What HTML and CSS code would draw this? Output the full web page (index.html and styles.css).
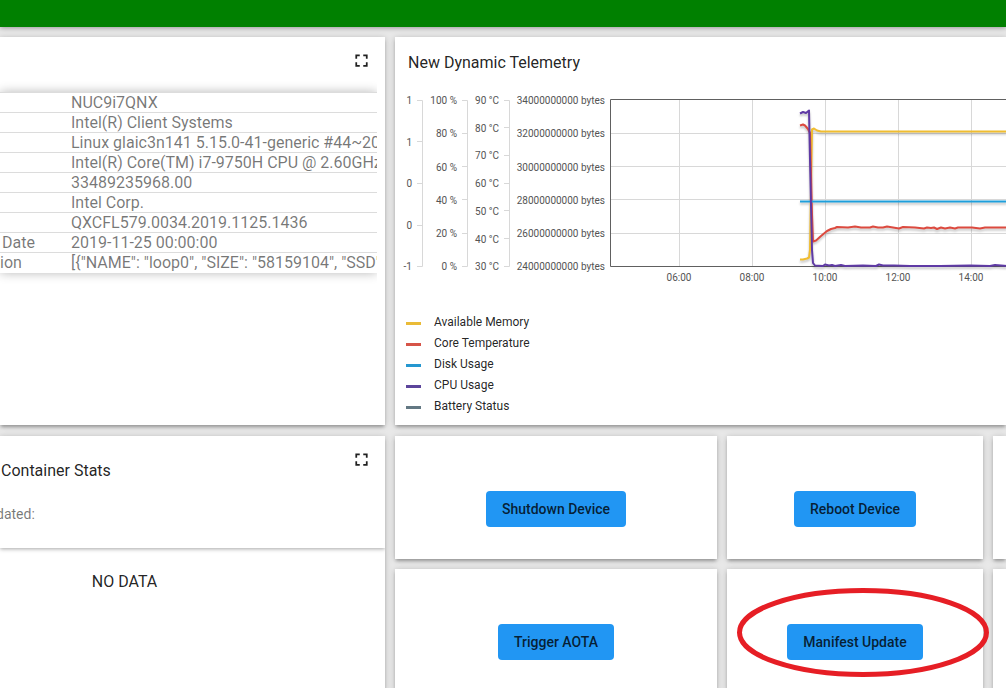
FILE: index.html
```html
<!DOCTYPE html>
<html lang="en">
<head>
<meta charset="utf-8">
<title>Device Dashboard</title>
<link rel="stylesheet" href="styles.css">
</head>
<body>
<header class="toolbar"></header>
<main class="dashboard">
  <section class="card info">
    <div class="card-tools">
      <button class="icon-button" type="button" aria-label="Fullscreen">
        <svg class="icon" viewBox="0 0 24 24"><path d="M7 14H5v5h5v-2H7v-3zm-2-4h2V7h3V5H5v5zm12 7h-3v2h5v-5h-2v3zM14 5v2h3v3h2V5h-5z"/></svg>
      </button>
    </div>
    <div class="table-clip">
      <table class="attributes">
        <tr><td class="key"></td><td>NUC9i7QNX</td></tr>
        <tr><td class="key"></td><td>Intel(R) Client Systems</td></tr>
        <tr><td class="key"></td><td>Linux glaic3n141 5.15.0-41-generic #44~20</td></tr>
        <tr><td class="key"></td><td>Intel(R) Core(TM) i7-9750H CPU @ 2.60GHz</td></tr>
        <tr><td class="key"></td><td>33489235968.00</td></tr>
        <tr><td class="key"></td><td>Intel Corp.</td></tr>
        <tr><td class="key"></td><td>QXCFL579.0034.2019.1125.1436</td></tr>
        <tr><td class="key indent">Date</td><td>2019-11-25 00:00:00</td></tr>
        <tr><td class="key">ion</td><td>[{"NAME": "loop0", "SIZE": "58159104", "SSD"</td></tr>
      </table>
    </div>
  </section>

  <section class="card telemetry">
    <h2 class="title">New Dynamic Telemetry</h2>
    <svg class="chart" viewBox="395 92 611 195" role="img" aria-label="Telemetry over time">
      <path class="axis" d="M417 100.5h5.500v166h-5.500M417 141.500h5M417 183.500h5M417 225.500h5M462 100.500h5.500v166h-5.500M462 133.500h5M462 166.500h5M462 199.500h5M462 233.500h5M504 100.500h5.500v166h-5.500M504 127.500h5M504 155.500h5M504 183.500h5M504 210.500h5M504 238.500h5"/>
      <g class="tick end">
        <text x="412" y="104">1</text><text x="412" y="146">1</text><text x="412" y="187">0</text><text x="412" y="229">0</text><text x="412" y="270">-1</text>
        <text x="457" y="104">100 %</text><text x="457" y="137">80 %</text><text x="457" y="171">60 %</text><text x="457" y="204">40 %</text><text x="457" y="237">20 %</text><text x="457" y="270">0 %</text>
        <text x="499" y="104">90 °C</text><text x="499" y="132">80 °C</text><text x="499" y="159">70 °C</text><text x="499" y="187">60 °C</text><text x="499" y="215">50 °C</text><text x="499" y="243">40 °C</text><text x="499" y="270">30 °C</text>
        <text x="605" y="104">34000000000 bytes</text><text x="605" y="137">32000000000 bytes</text><text x="605" y="171">30000000000 bytes</text><text x="605" y="204">28000000000 bytes</text><text x="605" y="237">26000000000 bytes</text><text x="605" y="270">24000000000 bytes</text>
      </g>
      <path class="axis" d="M611 133.500h395M611 166.500h395M611 199.500h395M611 233.500h395M679.500 100v166M752.500 100v166M825.500 100v166M898.500 100v166M971.500 100v166"/>
      <path class="frame" d="M1007 99.500H610.500V266.500H1007"/>
      <g class="tick middle">
        <text x="679" y="281">06:00</text><text x="752" y="281">08:00</text><text x="825" y="281">10:00</text><text x="898" y="281">12:00</text><text x="971" y="281">14:00</text>
      </g>
      <g class="series">
        <path class="memory" d="M800 259.500L803 259.500 807 258.500 809 257.500 810 249.500 812 129.500 814 128.500 817 130.500 821 131.500H1007"/>
        <path class="temperature" d="M800 125.500L803 124.500 805 125.500 808 129 810 133 812 214 813 241.500 816 240.500 821 236 827 231 831 229 835 228 837 227 848 227.500 855 226.500 861 227.500 870 227.500 873 226.500 878 227.500 883 227.500 887 226.500 893 227.500 899 228.500 903 227 915 227.500 924 228.500 927 227.500 931 228 934 227.500 937 229 941 227.500 945 228.500 950 227.500 955 228.500 958 227.500 972 227.500 980 228.500 985 227.500H1007"/>
        <path class="disk" d="M800 201.500H1007"/>
        <path class="cpu" d="M800 113.500L803 112 806 113 809 110.500 810 160 812 250 813 263 815 265.500 823 266 825 264.500 829 265.500 832 265 835 266 841 265 845 266 863 265.500 876 266 879 264.500 883 265.500 894 265.500 910 266 940 266 970 265.500 990 266 995 265 1007 266"/>
      </g>
    </svg>
    <ul class="legend">
      <li><span class="swatch yellow"></span>Available Memory</li>
      <li><span class="swatch red"></span>Core Temperature</li>
      <li><span class="swatch blue"></span>Disk Usage</li>
      <li><span class="swatch purple"></span>CPU Usage</li>
      <li><span class="swatch slate"></span>Battery Status</li>
    </ul>
  </section>

  <section class="card stats">
    <div class="stats-head">
      <div class="title-row">
        <h2 class="title">Container Stats</h2>
        <button class="icon-button" type="button" aria-label="Fullscreen">
          <svg class="icon" viewBox="0 0 24 24"><path d="M7 14H5v5h5v-2H7v-3zm-2-4h2V7h3V5H5v5zm12 7h-3v2h5v-5h-2v3zM14 5v2h3v3h2V5h-5z"/></svg>
        </button>
      </div>
      <p class="updated">dated:</p>
    </div>
    <p class="empty">NO DATA</p>
  </section>

  <section class="card action"><button class="button" type="button">Shutdown Device</button></section>
  <section class="card action"><button class="button" type="button">Reboot Device</button></section>
  <section class="card action"></section>
  <section class="card action"><button class="button" type="button">Trigger AOTA</button></section>
  <section class="card action marked">
    <button class="button" type="button">Manifest Update</button>
    <svg class="marker" viewBox="0 0 252 89"><ellipse cx="126" cy="44.500" rx="123.500" ry="42"/></svg>
  </section>
  <section class="card action"></section>
</main>
</body>
</html>
```
FILE: styles.css
```css
* { box-sizing: border-box; }
body {
  margin: 0;
  height: 100vh;
  overflow: hidden;
  background: #e8e8e8;
  color: rgba(0, 0, 0, 0.87);
  font-family: Roboto, sans-serif;
  font-size: 16px;
}
h2, p, ul { margin: 0; padding: 0; }
.toolbar {
  height: 27px;
  background: #008000;
  box-shadow: 0 1px 5px rgba(0, 0, 0, 0.35);
}
.dashboard {
  display: grid;
  grid-template-columns: minmax(0, 385fr) minmax(0, 322fr) minmax(0, 256fr) minmax(0, 13fr);
  grid-template-rows: 389px 123px 123px;
  gap: 10px;
  padding-top: 10px;
}
.card {
  min-width: 0;
  background: #fff;
  box-shadow: 0 1px 6px rgba(0, 0, 0, 0.22), 0 3px 3px -1px rgba(0, 0, 0, 0.24);
}
.info, .telemetry { margin-bottom: 1px; }
.telemetry { grid-column: 2 / -1; }
.stats { grid-row: 2 / 4; }
.title { font-size: 16px; line-height: 20px; font-weight: 400; }

.icon-button {
  display: flex;
  padding: 0;
  border: 0;
  background: none;
}
.icon { width: 21px; height: 21px; fill: #212121; }
.card-tools {
  display: flex;
  justify-content: flex-end;
  padding: 13px 13px 0 0;
}
.table-clip {
  margin-right: 8px;
  padding: 21px 0 20px;
  overflow: hidden;
}
.attributes {
  width: 100%;
  table-layout: fixed;
  border-collapse: collapse;
  color: rgba(0, 0, 0, 0.54);
  line-height: 19px;
  box-shadow: 0 0 10px rgba(0, 0, 0, 0.28);
  background: #fff;
}
.attributes td {
  height: 20px;
  padding: 0;
  border-top: 1px solid #dcdcdc;
  white-space: nowrap;
  overflow: hidden;
}
.attributes .key { width: 71px; }
.attributes .indent { padding-left: 2px; }

.telemetry .title { padding: 16px 13px 0; }
.chart {
  display: block;
  width: 611px;
  max-width: 100%;
  height: 195px;
  margin-top: 19px;
}
.axis { fill: none; stroke: #d8d8d8; }
.frame { fill: none; stroke: #606060; }
.tick { font-size: 10px; fill: #545454; }
.end { text-anchor: end; }
.middle { text-anchor: middle; }
.series {
  fill: none;
  stroke-width: 2;
  stroke-linejoin: round;
  filter: drop-shadow(0 2px 1px rgba(0, 0, 0, 0.25));
}
.memory { stroke: #f0bd30; }
.temperature { stroke: #dc4a3f; }
.disk { stroke: #1e9fdc; }
.cpu { stroke: #5f3aa5; }
.legend {
  padding: 25px 11px 0;
  list-style: none;
  font-size: 12px;
  line-height: 21px;
}
.legend li { display: flex; align-items: center; gap: 13px; }
.swatch { width: 15px; height: 3px; margin-top: 2px; }
.yellow { background: #eabb37; }
.red { background: #d65448; }
.blue { background: #2597d0; }
.purple { background: #5c459b; }
.slate { background: #637883; }

.stats-head {
  height: 112px;
  box-shadow: 0 1px 4px rgba(0, 0, 0, 0.35);
  clip-path: inset(0 0 -6px 0);
}
.title-row {
  display: flex;
  justify-content: space-between;
  padding: 13px 13px 0 1px;
}
.title-row .title { padding-top: 12px; }
.updated {
  margin-left: -4px;
  padding-top: 23px;
  color: rgba(0, 0, 0, 0.54);
  font-size: 14px;
  line-height: 20px;
}
.empty {
  padding: 24px 136px 0 0;
  line-height: 20px;
  text-align: center;
}
.action {
  display: flex;
  align-items: center;
  justify-content: center;
  padding-top: 23px;
}
.button {
  height: 36px;
  padding: 0 16px;
  border: 0;
  border-radius: 4px;
  background: #2196f3;
  color: rgba(0, 0, 0, 0.8);
  font: 500 14px Roboto, sans-serif;
  white-space: nowrap;
}
.marked { position: relative; z-index: 1; }
.marker {
  position: absolute;
  top: 19px;
  left: 10px;
  width: 252px;
  height: 89px;
  pointer-events: none;
}
.marker ellipse { fill: none; stroke: #e61e25; stroke-width: 5; }
```
